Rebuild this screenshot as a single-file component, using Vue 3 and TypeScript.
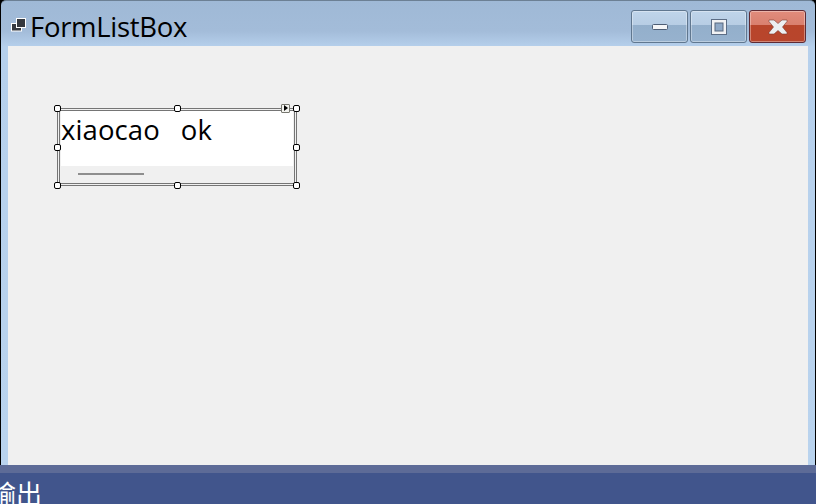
<template>
  <div class="screen">
    <div class="window">
      <div class="titlebar">
        <svg class="form-icon" width="15" height="14" viewBox="0 0 15 14">
          <rect x="0.500" y="5.500" width="10" height="7.500" fill="#34383e" stroke="#fff" />
          <rect x="5.500" y="0.500" width="9" height="9" fill="#34383e" stroke="#fff" />
        </svg>
        <span class="title">FormListBox</span>
        <div class="buttons">
          <button class="win-btn">
            <svg width="18" height="10" viewBox="0 0 18 10"><rect x="1.500" y="2.500" width="15" height="5" rx="1" fill="#f4f5f7" stroke="#4d5d74" /></svg>
          </button>
          <button class="win-btn">
            <svg width="18" height="18" viewBox="0 0 18 18"><rect x="1.500" y="1.500" width="15" height="15" fill="#f1f2f4" stroke="#5c6d85" /><rect x="5" y="5" width="8" height="8" fill="#8fa9c7" stroke="#59697f" /></svg>
          </button>
          <button class="win-btn close">
            <svg width="20" height="16" viewBox="0 0 20 16"><path d="M1 1h5l4 3.500L14 1h5v1.500L14.500 8l4.500 5.500V15h-5l-4-3.500L6 15H1v-1.500L5.500 8 1 2.500z" fill="#eceff2" stroke="#7c3b30" stroke-width=".6" /></svg>
          </button>
        </div>
      </div>
      <div class="client">
        <div class="designer">
          <div class="listbox">
            <div class="list-items">xiaocao<span class="gap"></span>ok</div>
            <div class="list-footer"><span class="scroll-line"></span></div>
          </div>
          <span v-for="h in handles" :key="h" class="handle" :class="h"></span>
          <span class="smart-tag"><i></i></span>
        </div>
      </div>
    </div>
    <div class="panel">
      <div class="panel-head"></div>
      <div class="panel-title">输出</div>
    </div>
  </div>
</template>

<script setup lang="ts">
const handles: string[] = ['tl', 'tc', 'tr', 'ml', 'mr', 'bl', 'bc', 'br']
</script>

<style>
html, body {
  margin: 0;
  background: #000;
}
</style>

<style scoped>
.screen {
  width: 816px;
  height: 504px;
  display: flex;
  flex-direction: column;
  overflow: hidden;
  font-family: "Open Sans", "Noto Sans CJK SC", sans-serif;
}

.window {
  flex: 1;
  display: flex;
  flex-direction: column;
  min-height: 0;
  padding: 0 7px;
  margin: 0 1px;
  background: linear-gradient(#9fb9d6 0, #a3bcd9 30px, #b6d0ec 46px, #b9d3ee 100%);
  border-top: 1px solid #6c8094;
  border-radius: 5px 5px 0 0;
}

.titlebar {
  height: 45px;
  flex: none;
  display: flex;
  align-items: center;
}

.form-icon {
  align-self: flex-start;
  margin: 17px 4px 0 3px;
  flex: none;
}

.title {
  font-size: 27.500px;
  line-height: 45px;
  color: #000;
  letter-spacing: -0.3px;
  margin-top: 6px;
}

.buttons {
  margin-left: auto;
  align-self: flex-start;
  display: flex;
  gap: 2px;
  margin-right: 2px;
  padding-top: 9px;
}

.win-btn {
  width: 57px;
  height: 33px;
  padding: 0;
  display: flex;
  align-items: center;
  justify-content: center;
  border: 1px solid #60778f;
  border-radius: 3px;
  background: linear-gradient(#c0d5ea 0, #b7cde4 44%, #93afcb 46%, #97b2ce 100%);
  box-shadow: inset 0 0 0 1px rgba(255, 255, 255, 0.35);
}

.win-btn.close {
  border-color: #5e2a33;
  background: linear-gradient(#e18c7c 0, #d9806f 44%, #b8452b 46%, #b8452c 100%);
}

.client {
  flex: 1;
  background: #f0f0f0;
  padding: 62px 0 0 49px;
}

.designer {
  position: relative;
  width: 240px;
  height: 78px;
  box-sizing: border-box;
  border: 3px double #757575;
}

.listbox {
  margin: 0 1px;
  height: 72px;
  display: flex;
  flex-direction: column;
}

.list-items {
  height: 55px;
  background: #fff;
  color: #000;
  font-size: 27.500px;
  line-height: 37px;
  letter-spacing: 0.1px;
  white-space: nowrap;
}

.gap {
  display: inline-block;
  width: 21px;
}

.list-footer {
  flex: 1;
  background: #f0f0f0;
}

.scroll-line {
  display: block;
  width: 66px;
  height: 2px;
  margin: 7px 0 0 17px;
  background: #8e8e8e;
}

.handle {
  position: absolute;
  width: 7px;
  height: 7px;
  box-sizing: border-box;
  background: #fff;
  border: 1px solid #000;
  border-radius: 2px;
}

.tl { left: -6px; top: -6px; }
.tc { left: 114px; top: -6px; }
.tr { right: -6px; top: -6px; }
.ml { left: -6px; top: 33px; }
.mr { right: -6px; top: 33px; }
.bl { left: -6px; bottom: -6px; }
.bc { left: 114px; bottom: -6px; }
.br { right: -6px; bottom: -6px; }

.smart-tag {
  position: absolute;
  right: 4px;
  top: -7px;
  width: 9px;
  height: 9px;
  box-sizing: border-box;
  background: #f4f4f0;
  border: 1px solid #77776f;
  border-radius: 1px;
}

.smart-tag i {
  position: absolute;
  left: 2px;
  top: 0;
  width: 0;
  height: 0;
  border-left: 4px solid #000;
  border-top: 3.500px solid transparent;
  border-bottom: 3.500px solid transparent;
}

.panel {
  flex: none;
  height: 39px;
  overflow: hidden;
  background: #41558c;
}

.panel-head {
  height: 8px;
  background: #5d6b97;
}

.panel-title {
  color: #fff;
  font-size: 26px;
  line-height: 42px;
  margin-left: -10px;
  white-space: nowrap;
}
</style>
